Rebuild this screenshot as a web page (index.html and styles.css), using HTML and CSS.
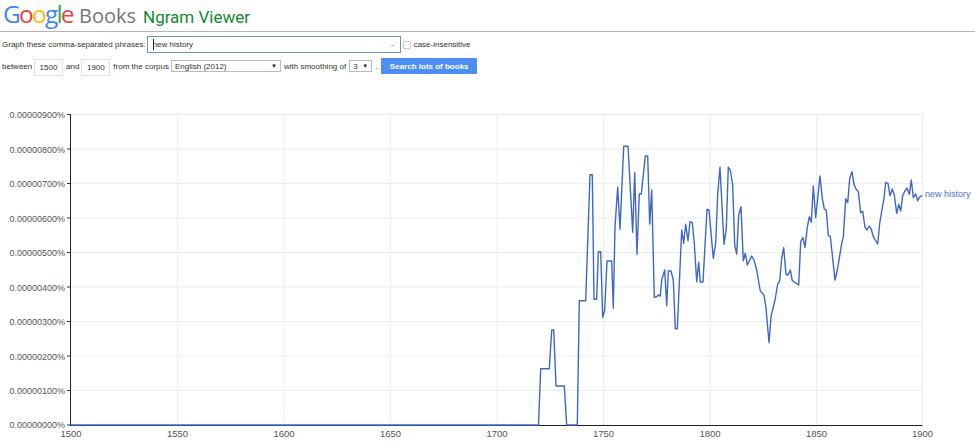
FILE: index.html
```html
<!DOCTYPE html>
<html lang="en">
<head>
<meta charset="utf-8">
<title>Google Books Ngram Viewer</title>
<link rel="stylesheet" href="styles.css">
</head>
<body>
<header class="masthead">
  <div class="logo"><span class="g-blue">G</span><span class="g-red">o</span><span class="g-yellow">o</span><span class="g-blue">g</span><span class="g-green">l</span><span class="g-red">e</span></div>
  <div class="books">Books</div>
  <div class="product">Ngram Viewer</div>
</header>
<form class="controls">
  <div class="row row-one">
    <label class="lbl">Graph these comma-separated phrases:</label>
    <div class="phrase"><span class="caret"></span><span>new history</span><span class="drop"></span></div>
    <span class="check"></span>
    <label class="lbl">case-insensitive</label>
  </div>
  <div class="row row-two">
    <label class="lbl w-between">between</label>
    <span class="year">1500</span>
    <label class="lbl">and</label>
    <span class="year second">1900</span>
    <label class="lbl">from the corpus</label>
    <span class="select corpus"><span>English (2012)</span><span class="tri">▼</span></span>
    <label class="lbl">with smoothing of</label>
    <span class="select smooth"><span>3</span><span class="tri">▼</span></span>
    <label class="lbl dot">.</label>
    <span class="search">Search lots of books</span>
  </div>
</form>
<svg class="chart" width="975" height="353" viewBox="0 90 975 353" xmlns="http://www.w3.org/2000/svg">
  <g class="grid">
    <path d="M71 114.500H922.500M71 149H922.500M71 183.500H922.500M71 218H922.500M71 252.500H922.500M71 287H922.500M71 321.500H922.500M71 356H922.500M71 390.500H922.500"/>
    <path d="M177.500 114V425M284 114V425M390.500 114V425M497 114V425M603.500 114V425M710 114V425M816.500 114V425M922.500 114V425"/>
  </g>
  <g class="ticks">
    <path d="M67 114.500H71M67 149H71M67 183.500H71M67 218H71M67 252.500H71M67 287H71M67 321.500H71M67 356H71M67 390.500H71M67 425H71"/>
  </g>
  <path class="axis" d="M70.500 114V425.500H922.500"/>
  <g class="ylab">
    <text x="65" y="118">0.00000900%</text>
    <text x="65" y="152.500">0.00000800%</text>
    <text x="65" y="187">0.00000700%</text>
    <text x="65" y="221.500">0.00000600%</text>
    <text x="65" y="256">0.00000500%</text>
    <text x="65" y="290.500">0.00000400%</text>
    <text x="65" y="325">0.00000300%</text>
    <text x="65" y="359.500">0.00000200%</text>
    <text x="65" y="394">0.00000100%</text>
    <text x="65" y="428">0.00000000%</text>
  </g>
  <g class="xlab">
    <text x="71" y="437">1500</text>
    <text x="177.500" y="437">1550</text>
    <text x="284" y="437">1600</text>
    <text x="390.500" y="437">1650</text>
    <text x="497" y="437">1700</text>
    <text x="603.500" y="437">1750</text>
    <text x="710" y="437">1800</text>
    <text x="816.500" y="437">1850</text>
    <text x="922.500" y="437">1900</text>
  </g>
  <polyline class="series" points="71,425 538.500,425 540.700,368.700 549.300,368.700 551.700,330 553.700,330 556,386 564.300,386 566.700,425 577.300,425 579.300,300.700 585.700,300.700 590,174.700 592.300,174.700 594,299.300 596.700,299.300 598.300,251.700 600.700,251.700 602.700,317.300 604.700,310 607,261 611.700,261 613.300,308 615,226.700 617.700,187.300 620,229.300 623.700,146.300 628,146.300 632.700,232.300 634.700,172.700 637,254.300 639.300,194 641.300,194 645.300,156 647.700,156 649.700,224.300 651.700,190 654.300,297.300 656.700,296.700 658.300,295 660.300,296 661.700,280 664.700,270 666.700,305.700 668.300,271 671,271 673.300,280 675.300,328.700 677.300,328.700 681.700,230 683.700,243.300 685.700,224.300 688,240.700 690,221.700 692.300,222.700 694.300,243 696.700,281.700 698.700,262.300 700.300,282 703,282 707,209.300 709,210 713.300,258.300 715.700,243 717.700,194.300 720,167.300 724,244.300 726.300,228.300 728.300,167.300 730.300,170 732.700,185 734.700,245 736.700,254 738.700,215 741,206.700 743.300,260.700 745.300,253.300 747.300,265 751.700,256 754,260 756.700,270 760.300,291 764,295 766,308 769,342.700 771,316.700 775,300 777.700,284 779.700,281 781.700,258.300 783.700,247.700 786,274.300 788,275 790.300,270 792.300,280.700 798.700,285 800.700,241.700 803,237.700 805,247.300 807.300,227.300 809.300,216.700 811.300,222.300 813.300,186 815.700,217.700 820,176 822.300,198.300 824.300,209 826.300,210.300 828.300,235.700 830.300,236.300 835,280 837.300,270 839.300,258.300 841.700,243.300 843.300,237.300 845.700,198.700 847.700,202.700 849.700,178.300 852,171.700 854,184.300 856,189 858.300,191.700 860.700,212.700 862.700,211.300 865,227.300 867,230 869.300,226 871.300,229.300 873.300,236.700 877.700,244 879.700,223.300 881.700,211 884,198.300 885.700,182.300 888,183.300 890,195.700 892.300,189 894.300,195 896.700,213.300 898.700,204.300 900.700,211 902.700,195.700 905,190.700 907,188.300 909.300,194.300 911.300,180 913.300,197.700 915.700,194 917.700,200.700 920,196.700 922.300,195.700"/>
  <text class="serieslab" x="925" y="197">new history</text>
</svg>
</body>
</html>
```
FILE: styles.css
```css
html, body { margin: 0; padding: 0; background: #fff; }
body { width: 975px; height: 443px; overflow: hidden; font-family: "Liberation Sans", Arial, sans-serif; color: #333; }
*, *::before, *::after { box-sizing: border-box; }
.masthead { height: 32px; border-bottom: 1px solid #b5b5b5; display: flex; align-items: baseline; padding-left: 3px; }
.logo { font-family: "Open Sans", sans-serif; font-weight: 500; font-size: 24.500px; letter-spacing: -1.800px; line-height: 27px; width: 76px; flex: none; }
.g-blue { color: #4285f4; } .g-red { color: #ea4335; } .g-yellow { color: #fbbc05; } .g-green { color: #34a853; }
.books { font-family: "Open Sans", sans-serif; font-size: 20px; color: #757575; width: 64px; flex: none; line-height: 27px; }
.product { font-family: "Roboto", sans-serif; font-size: 17px; color: #0f8a2d; line-height: 27px; white-space: nowrap; }
.controls { font-size: 8px; }
.row { display: flex; align-items: center; padding-left: 2px; }
.row-one { height: 17px; margin-top: 4px; }
.row-two { height: 18px; margin-top: 5px; }
.lbl { white-space: nowrap; }
.row-two .lbl { margin-bottom: 1px; }
.w-between { width: 29px; }
.phrase { width: 254px; height: 17px; margin-left: 1px; border: 1px solid #6d93c9; display: flex; align-items: center; padding-left: 5px; position: relative; flex: none; }
.caret { width: 1px; height: 11px; background: #222; margin-right: -1px; }
.drop { position: absolute; right: 6px; top: 8px; width: 3px; height: 1px; background: #bbb; }
.check { width: 8px; height: 8px; border: 1px solid #ccc; border-radius: 1px; margin: 0 3px 0 2px; flex: none; }
.year { width: 29px; height: 17px; border: 1px solid #e0e0e0; display: flex; align-items: center; justify-content: center; margin: 1px 3px 0; flex: none; }
.second { margin-left: 2px; }
.select { height: 12px; border: 1px solid #bbb; background: #fff; display: flex; align-items: center; justify-content: space-between; padding: 0 3px; margin: 0 3px 2px; flex: none; }
.corpus { width: 110px; margin-left: 2px; }
.smooth { width: 23px; }
.tri { font-size: 6px; color: #222; }
.dot { width: 6px; }
.search { width: 96px; height: 16px; background: #4d8ef3; color: #fff; font-weight: bold; display: flex; align-items: center; justify-content: center; border-radius: 1px; flex: none; margin-bottom: 2px; }
.chart { display: block; margin-top: 14px; }
.grid path { stroke: #ececf0; stroke-width: 1; fill: none; }
.ticks path { stroke: #333; stroke-width: 1; fill: none; }
.axis { stroke: #222; stroke-width: 1; fill: none; }
.ylab text { font-size: 9px; fill: #555; text-anchor: end; }
.xlab text { font-size: 9.500px; fill: #555; text-anchor: middle; }
.series { fill: none; stroke: #3d68c8; stroke-width: 1.400; stroke-linejoin: round; }
.serieslab { font-size: 9px; fill: #4a72cc; }
```
